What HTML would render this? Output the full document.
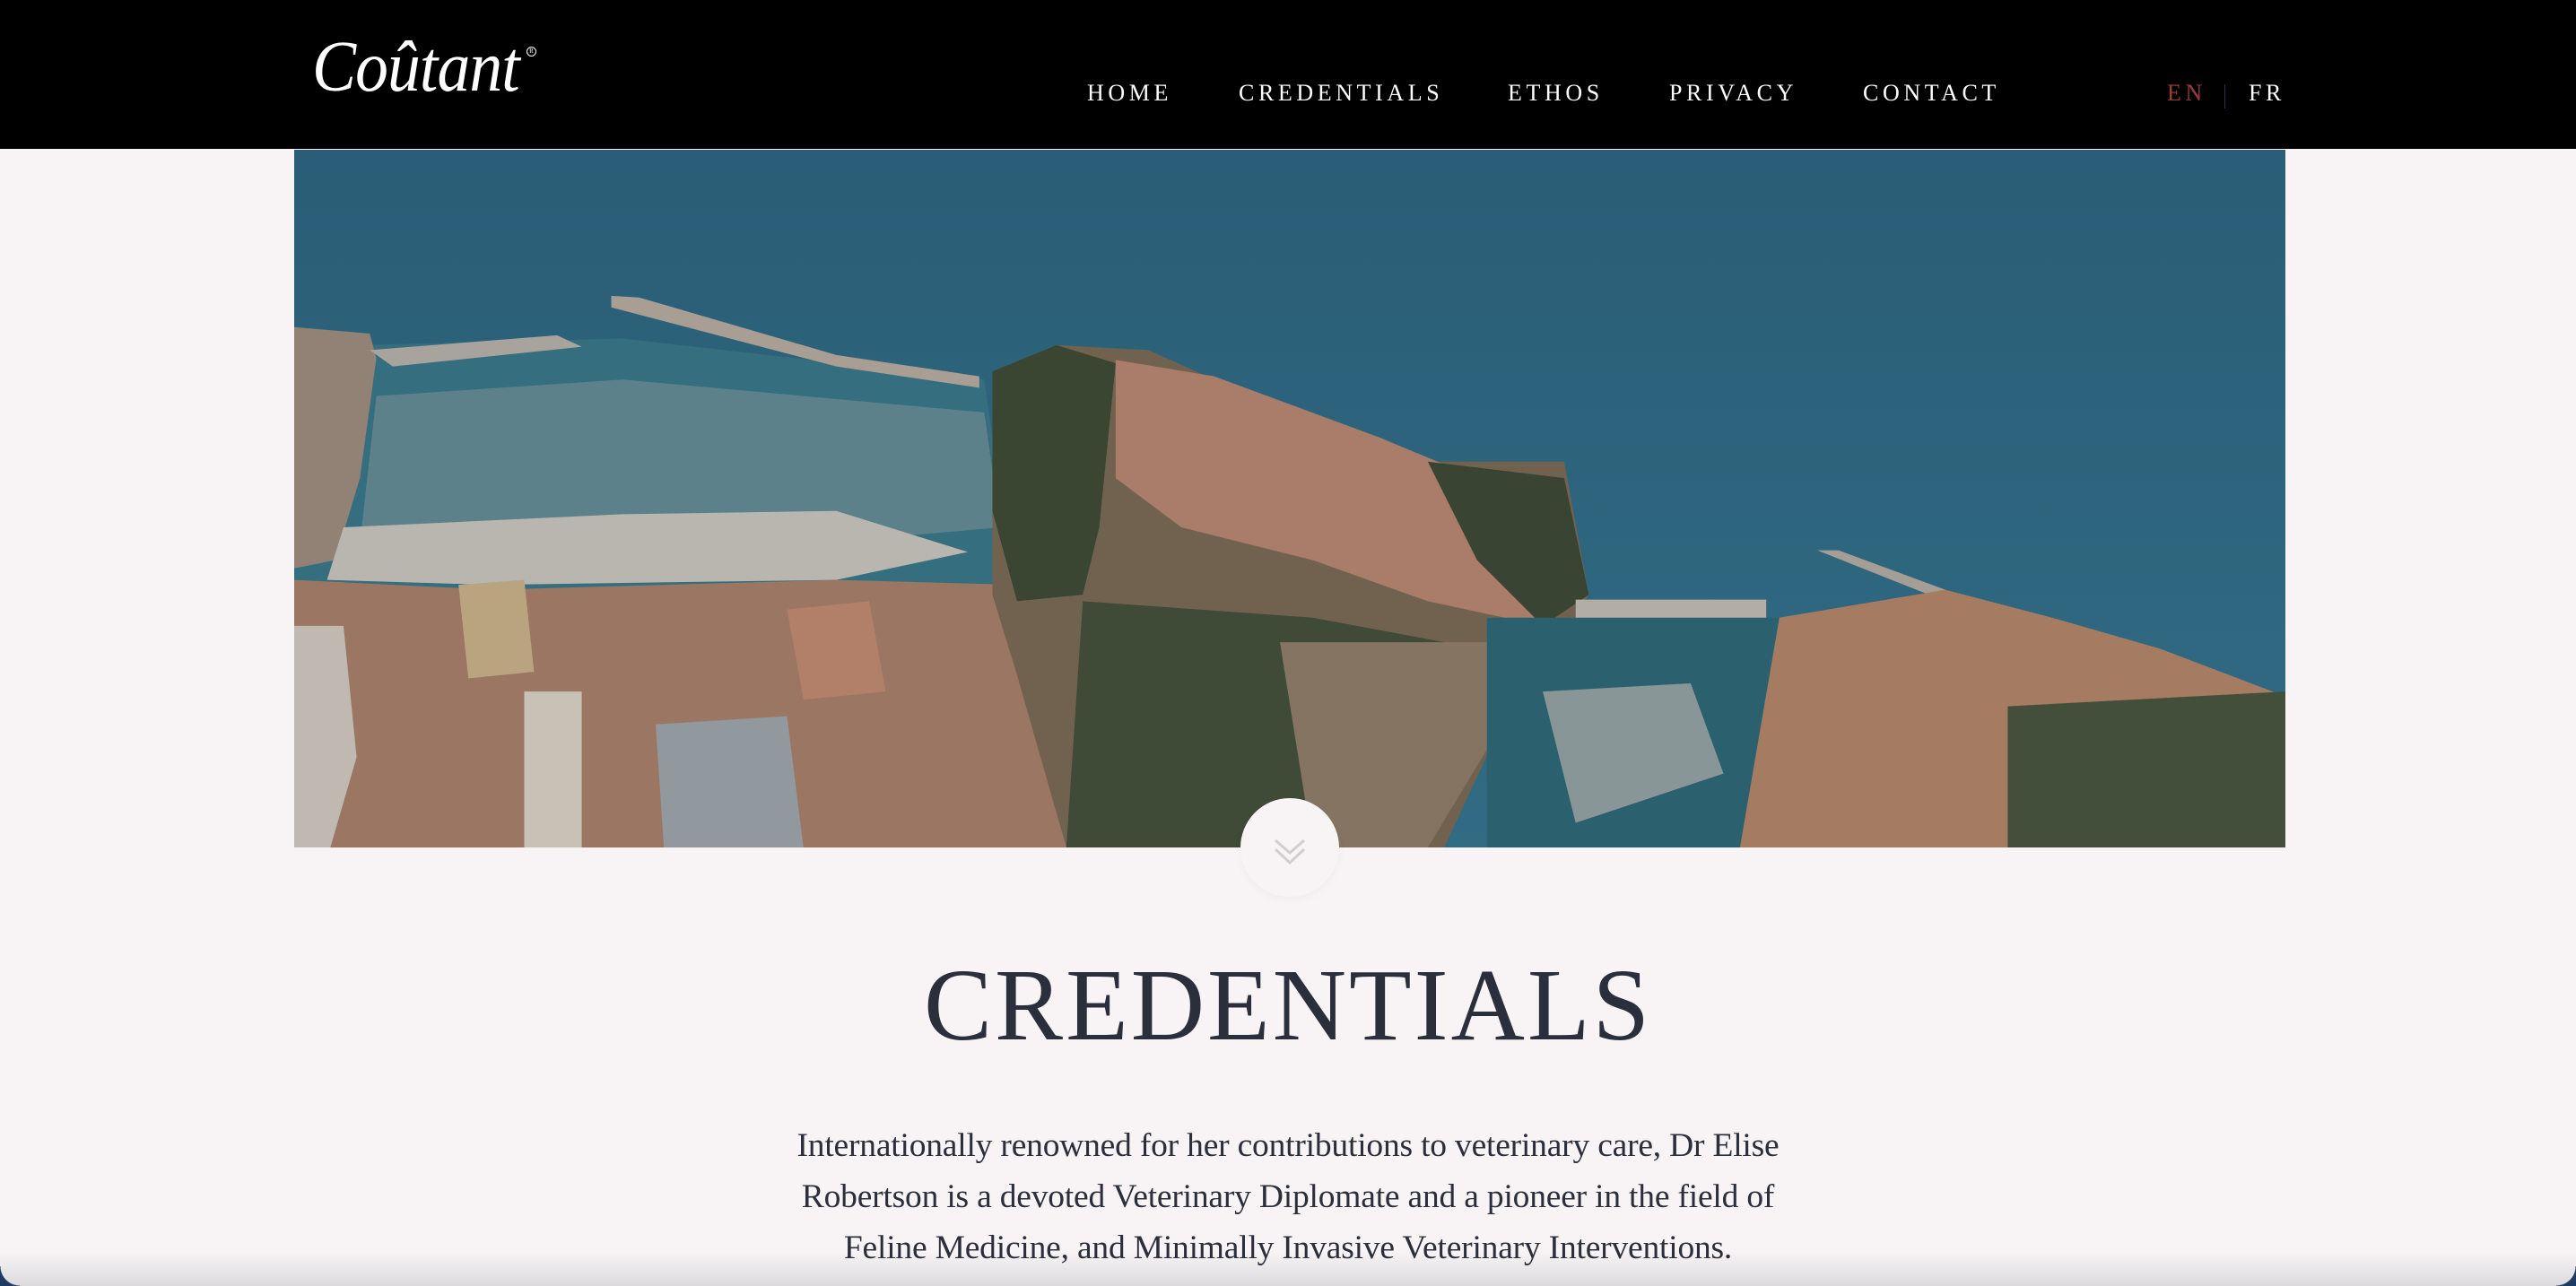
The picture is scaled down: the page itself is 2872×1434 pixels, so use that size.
<!DOCTYPE html>
<html><head><meta charset="utf-8"><style>
*{margin:0;padding:0;box-sizing:border-box}
html,body{width:2872px;height:1434px;overflow:hidden;background:#f8f4f5}
body{position:relative;font-family:"Liberation Serif",serif}
.hdr{position:absolute;left:0;top:0;width:2872px;height:166px;background:#000}
.logo{position:absolute;left:348px;top:30px;color:#fff;font-style:italic;font-size:80px;letter-spacing:-1px;font-family:"Liberation Serif",serif;transform:scaleX(0.92);transform-origin:left}
.reg{position:absolute;left:587px;top:52px;color:#fff;border:1px solid #fff;border-radius:50%;width:11px;height:11px;line-height:9px;text-align:center;font-size:7px}
.nav{position:absolute;top:89px;color:#fff;font-size:26px;letter-spacing:4.6px;line-height:30px;white-space:nowrap}
.img{position:absolute;left:328px;top:167px;width:2220px;height:778px;overflow:hidden}
.circ{position:absolute;left:1383px;top:890px;width:110px;height:110px;border-radius:50%;background:#f8f4f5;box-shadow:0 4px 10px rgba(0,0,0,0.03)}
h1{position:absolute;left:0;width:2872px;top:1056px;text-align:center;font-weight:normal;font-size:114px;letter-spacing:3px;color:#2a2f3b;line-height:130px}
.p{position:absolute;left:0;width:2872px;text-align:center;font-size:37.5px;color:#2a2f3b;letter-spacing:-0.2px;line-height:40px}
.shade{position:absolute;left:0;top:1395px;width:2872px;height:39px;background:linear-gradient(#f8f4f500,#dcdadd)}
.corner{position:absolute;bottom:0;width:22px;height:22px}
</style></head><body>
<div class="hdr">
<div class="logo">Coûtant</div><div class="reg">R</div>
<div class="nav" style="left:1212px">HOME</div>
<div class="nav" style="left:1381px">CREDENTIALS</div>
<div class="nav" style="left:1681px">ETHOS</div>
<div class="nav" style="left:1861px">PRIVACY</div>
<div class="nav" style="left:2077px">CONTACT</div>
<div class="nav" style="left:2416px;color:#9b3b3d">EN</div>
<div style="position:absolute;left:2480px;top:94px;width:1px;height:27px;background:#2c3345"></div>
<div class="nav" style="left:2507px">FR</div>
</div>
<div class="img">
<svg width="2220" height="778" viewBox="0 0 1212 425" preserveAspectRatio="none">
<defs><linearGradient id="sea" x1="0" y1="0" x2="0" y2="1"><stop offset="0" stop-color="#2e6580"/><stop offset="1" stop-color="#35748e"/></linearGradient></defs>
<rect width="1212" height="425" fill="url(#sea)"/>
<polygon points="0,120 200,115 420,140 440,275 0,285" fill="#3a7788"/>
<polygon points="193,89 210,90 330,125 417,138 417,145 330,132 193,96" fill="#b6aaa0"/>
<polygon points="0,108 46,112 50,127 40,200 25,250 0,255" fill="#9c8c7e"/>
<polygon points="46,122 160,113 175,120 60,132" fill="#b5b0a8"/>
<polygon points="50,150 200,140 420,160 430,230 260,245 100,250 40,240" fill="#7f9aa0" opacity="0.6"/>
<polygon points="30,230 200,222 330,220 410,245 330,262 120,265 20,262" fill="#c8c4be"/>
<polygon points="0,262 120,268 330,262 440,265 470,300 480,425 0,425" fill="#a67f6b"/>
<polygon points="0,290 30,290 38,370 22,425 0,425" fill="#cfc8c0"/>
<polygon points="100,265 140,262 146,318 106,322" fill="#c9b189"/>
<polygon points="140,330 175,330 175,425 140,425" fill="#d8d0c4"/>
<polygon points="220,350 300,345 310,425 225,425" fill="#9ca4aa"/>
<polygon points="300,280 350,275 360,330 310,335" fill="#c08a70"/>
<polygon points="425,135 464,119 520,122 560,140 620,165 680,190 773,190 788,271 773,298 734,352 700,425 470,425 440,320 425,271" fill="#7a6a56"/>
<polygon points="425,135 464,119 500,130 490,230 480,271 440,275 425,220" fill="#3f4c36"/>
<polygon points="500,128 560,138 660,175 720,200 773,240 760,290 690,275 620,250 540,230 500,200" fill="#b68772"/>
<polygon points="690,190 773,200 788,271 760,290 720,250" fill="#3e4b36"/>
<polygon points="480,275 620,285 700,300 734,330 650,380 600,425 470,425" fill="#45513c"/>
<polygon points="600,300 734,300 760,330 734,352 690,425 620,425" fill="#8e7d69"/>
<polygon points="726,285 904,285 904,425 726,425" fill="#2f6878"/>
<polygon points="780,274 896,274 896,285 780,285" fill="#c2bbb2"/>
<polygon points="927,244 940,244 1005,268 1005,275" fill="#b2aaa2"/>
<polygon points="760,330 850,325 870,380 780,410" fill="#bfbbb5" opacity="0.7"/>
<polygon points="904,285 1005,268 1070,285 1136,304 1212,333 1212,425 880,425" fill="#b28669"/>
<polygon points="1043,339 1212,330 1212,425 1043,425" fill="#4a5540"/>
<rect width="1212" height="425" fill="#000" opacity="0.07"/>
</svg>
</div>
<div class="circ"><svg width="110" height="110" viewBox="0 0 110 110"><polyline points="39,47 55,61 71,47" fill="none" stroke="#cfcfd1" stroke-width="3"/><polyline points="39,57 55,72 71,57" fill="none" stroke="#cfcfd1" stroke-width="3"/></svg></div>
<div class="shade"></div>
<h1>CREDENTIALS</h1>
<div class="p" style="top:1258px">Internationally renowned for her contributions to veterinary care, Dr Elise</div>
<div class="p" style="top:1315px">Robertson is a devoted Veterinary Diplomate and a pioneer in the field of</div>
<div class="p" style="top:1372px">Feline Medicine, and Minimally Invasive Veterinary Interventions.</div>
<div class="corner" style="left:0;background:radial-gradient(circle at 22px 0,transparent 21px,#1d3b63 22px)"></div>
<div class="corner" style="right:0;background:radial-gradient(circle at 0 0,transparent 21px,#1d3b63 22px)"></div>
</body></html>
